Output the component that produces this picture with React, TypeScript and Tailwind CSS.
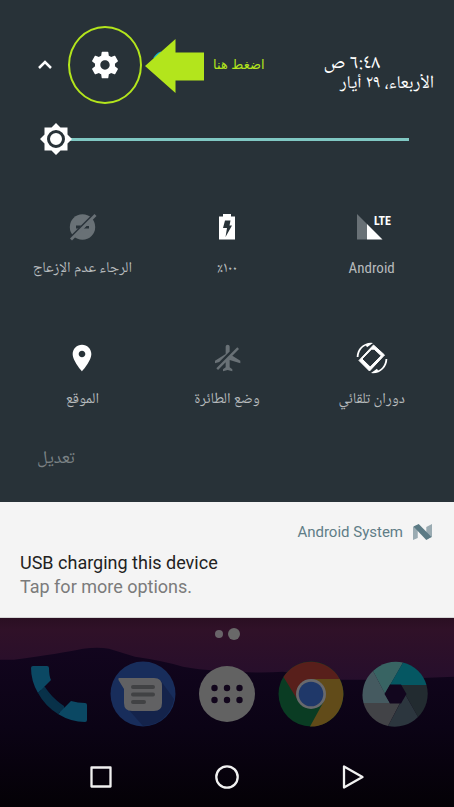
import type { ReactNode } from 'react';

function Gear() {
  return (
    <svg viewBox="0 0 24 24" className="size-8" fill="#fff" aria-hidden="true">
      <path d="M19.43 12.98c.04-.32.07-.64.07-.98s-.03-.66-.07-.98l2.11-1.65c.19-.15.24-.42.12-.64l-2-3.46c-.12-.22-.39-.3-.61-.22l-2.49 1c-.52-.4-1.08-.73-1.69-.98l-.38-2.65C14.46 2.18 14.25 2 14 2h-4c-.25 0-.46.18-.49.42l-.38 2.65c-.61.25-1.17.59-1.69.98l-2.49-1c-.23-.09-.49 0-.61.22l-2 3.46c-.13.22-.07.49.12.64l2.11 1.65c-.04.32-.07.65-.07.98s.03.66.07.98l-2.11 1.65c-.19.15-.24.42-.12.64l2 3.46c.12.22.39.3.61.22l2.49-1c.52.4 1.08.73 1.69.98l.38 2.65c.03.24.24.42.49.42h4c.25 0 .46-.18.49-.42l.38-2.65c.61-.25 1.17-.59 1.69-.98l2.49 1c.23.09.49 0 .61-.22l2-3.46c.12-.22.07-.49-.12-.64l-2.11-1.65zM12 15.500c-1.930 0-3.500-1.570-3.500-3.500s1.570-3.500 3.500-3.500 3.500 1.570 3.500 3.500-1.570 3.500-3.500 3.500z" />
    </svg>
  );
}

function BrightnessSlider() {
  return (
    <div className="relative mx-10 h-8">
      <div className="flex h-8 items-center pl-4 pr-[5px]">
        <div className="h-[3px] w-full bg-[#80c8c3]" />
      </div>
      <svg viewBox="0 0 32 32" className="pointer-events-none absolute left-0 top-0 size-8" aria-hidden="true">
        <path d="M16 0l4.500 4.500H27.500V11.500L32 16l-4.500 4.500V27.500H20.500L16 32l-4.500-4.500H4.500V20.500L0 16l4.500-4.500V4.500H11.500z" fill="#fff" />
        <circle cx="16" cy="16" r="7.500" fill="#fff" stroke="#283238" strokeWidth="3" />
      </svg>
      <input type="range" min="0" max="100" defaultValue="0" aria-label="السطوع" className="absolute inset-0 h-8 w-full cursor-pointer opacity-0" />
    </div>
  );
}

const tiles: { label: string; latin?: boolean; icon: ReactNode }[] = [
  {
    label: 'Android',
    latin: true,
    icon: (
      <svg viewBox="0 0 40 32" className="h-8 w-10" aria-hidden="true">
        <path d="M5 3v25.500h10V13z" fill="#697176" />
        <path d="M15 13v15.500h15.500z" fill="#fff" />
        <text x="22" y="14" direction="ltr" fill="#fff" fontSize="12" fontWeight="700" fontFamily="Roboto Condensed">LTE</text>
      </svg>
    ),
  },
  {
    label: '١٠٠٪',
    icon: (
      <svg viewBox="0 0 32 32" className="size-8" aria-hidden="true">
        <path d="M8 5.500h4V3h8v2.500h4v23H8z" fill="#fff" />
        <path d="M14 9.500h5.500l-1 5h2.500l-6.500 11.500 1.500-9h-4z" fill="#283238" />
      </svg>
    ),
  },
  {
    label: 'الرجاء عدم الإزعاج',
    icon: (
      <svg viewBox="0 0 32 32" className="size-8" aria-hidden="true">
        <circle cx="16.500" cy="16" r="12.700" fill="#697176" />
        <path d="M10 14.500h5l-2 3h-3zM20 15h3v2.500h-5.500z" fill="#283238" />
        <path d="M3.500 26L26 3.500l2 1.500L5.500 28z" fill="#283238" />
        <path d="M4 27.500L28.500 3l2 2L6 29.500z" fill="#697176" />
      </svg>
    ),
  },
  {
    label: 'دوران تلقائي',
    icon: (
      <svg viewBox="0 0 32 32" className="size-8" fill="#fff" aria-hidden="true">
        <path fillRule="evenodd" strokeLinejoin="round" stroke="#fff" strokeWidth="1" d="M17.500 3L28.500 13L13.500 29L3 18.500zM15.500 7.200L6 17L14.200 25L25.200 13.700L18.200 7.200z" />
        <path d="M.7 15C.8 7 7 .8 15 .7l2 .3-6 4.200-1-1.700C5.500 5.500 2.800 9.500 2.500 15zM31.300 17c-.1 8-6.300 14.200-14.300 14.300l-2-.3 6-4.200 1 1.700c4.500-2 7.200-6 7.500-11.500z" />
      </svg>
    ),
  },
  {
    label: 'وضع الطائرة',
    icon: (
      <svg viewBox="0 0 24 24" className="size-8" fill="#697176" aria-hidden="true">
        <path d="M13 9V3.500c0-.83-.67-1.500-1.500-1.500S10 2.670 10 3.500v3.680l7.830 7.830L21 16v-2l-8-5zM3 5.270l4.990 4.990L2 14v2l8-2.500V19l-2 1.500V22l3.500-1 3.500 1v-1.500L13 19v-3.730L18.730 21 20 19.730 4.270 4 3 5.270z" transform="matrix(-1 0 0 1 24 0)" />
      </svg>
    ),
  },
  {
    label: 'الموقع',
    icon: (
      <svg viewBox="0 0 24 24" className="size-8" fill="#fff" aria-hidden="true">
        <path d="M12 2C8.130 2 5 5.130 5 9c0 5.250 7 13 7 13s7-7.750 7-13c0-3.870-3.130-7-7-7zm0 9.500c-1.380 0-2.500-1.120-2.500-2.500s1.120-2.500 2.500-2.500 2.500 1.120 2.500 2.500-1.120 2.500-2.500 2.500z" />
      </svg>
    ),
  },
];

function QuickSettings() {
  return (
    <section className="bg-[#283238] pt-[26px] pb-8">
      <header dir="ltr" className="flex h-[78px] items-center">
        <button aria-label="طي" className="ml-[37px] mr-[15px]">
          <svg viewBox="0 0 16 16" className="size-4" fill="none" stroke="#fff" strokeWidth="2.500" aria-hidden="true">
            <path d="M2 11l6-6 6 6" />
          </svg>
        </button>
        <button aria-label="الإعدادات" className="flex h-[78px] w-[74px] items-center justify-center rounded-[50%] border-2 border-[#b3e51c]">
          <Gear />
        </button>
        <svg viewBox="0 0 60 56" className="ml-[3px] mt-[2px] h-14 w-[60px]" aria-hidden="true">
          <path d="M8 20.500Q11 15 16 13.500v4z" fill="#14b5d0" />
          <path d="M0 28L30.500 1v13.500H59v28H30.500V55z" fill="#b3e51c" />
        </svg>
        <p dir="rtl" className="ml-2 whitespace-nowrap font-['Liberation_Sans','DejaVu_Sans',sans-serif] text-[13px] text-[#b3e51c]">اضغط هنا</p>
        <div dir="rtl" className="ml-auto mr-5 mt-4 whitespace-nowrap text-right text-white">
          <p className="mr-[54px] text-xl leading-5">٦:٤٨ ص</p>
          <p className="text-lg leading-[18px]">الأربعاء، ٢٩ أيار</p>
        </div>
      </header>
      <div dir="ltr" className="mt-[19px]">
        <BrightnessSlider />
      </div>
      <div className="mt-14 grid grid-cols-3 gap-y-16 px-[10px]">
        {tiles.map((t) => (
          <button key={t.label} className="flex flex-col items-center gap-[15px]">
            {t.icon}
            <span className={t.latin ? "font-['Roboto_Condensed',sans-serif] text-[15px] leading-5 text-[#b7bbbd]" : 'whitespace-nowrap text-[15px] leading-5 text-[#b7bbbd]'}>{t.label}</span>
          </button>
        ))}
      </div>
      <div className="mt-[37px] flex justify-end pl-[37px]">
        <button className="text-lg leading-6 text-[#7b8285]">تعديل</button>
      </div>
    </section>
  );
}

function Notification() {
  return (
    <section dir="ltr" className="border-b border-[#d5d5d5] bg-[#f4f4f4] px-5 pt-5 pb-[18px] font-['Roboto',sans-serif]">
      <div className="flex items-center justify-end gap-[10px] pr-[2px]">
        <p className="text-[15px] leading-5 text-[#607d87]">Android System</p>
        <svg viewBox="0 0 20 16" preserveAspectRatio="none" className="h-4 w-[19px]" aria-hidden="true">
          <path d="M0 3l5-2v13l-5 2zM14 3l6-3v13l-6 2z" fill="#9aabb2" />
          <path d="M0.500 2.500L6 0l13.500 13L14 16z" fill="#5b7a84" />
        </svg>
      </div>
      <h2 className="mt-[9px] text-lg leading-6 text-[#222]">USB charging this device</h2>
      <p className="text-lg leading-6 text-[#7b7b7b]">Tap for more options.</p>
    </section>
  );
}

function Home() {
  return (
    <section dir="ltr" className="relative isolate flex-1 overflow-hidden">
      <svg viewBox="0 0 454 190" preserveAspectRatio="none" className="absolute inset-0 -z-10 size-full" aria-hidden="true">
        <defs>
          <linearGradient id="sky" x1="0" y1="0" x2="0" y2="1">
            <stop offset="0" stopColor="#2a0f22" />
            <stop offset="0.060" stopColor="#301128" />
            <stop offset="0.350" stopColor="#250e2c" />
          </linearGradient>
          <linearGradient id="hill" x1="0" y1="0" x2="0" y2="1">
            <stop offset="0" stopColor="#12051e" />
            <stop offset="0.500" stopColor="#0b0315" />
            <stop offset="1" stopColor="#040106" />
          </linearGradient>
        </defs>
        <path d="M0 0h454v190H0z" fill="url(#sky)" />
        <path d="M0 42h14Q60 36 83 31q15-2 26 0l26 8q28 4 48 10 15 3 35 4 40 3 65 1l55 8h38l78-3v131H0z" fill="url(#hill)" />
      </svg>
      <div className="flex items-center justify-center gap-[5px] pt-[10px]">
        <span className="size-2 rounded-full bg-[#696469]" />
        <span className="size-3 rounded-full bg-[#696969]" />
      </div>
      <nav className="mt-[21px] grid grid-cols-5 justify-items-center px-[17px]">
        <button aria-label="Phone">
          <svg viewBox="0 0 66 66" className="size-[66px]" aria-hidden="true">
            <path d="M12 24c8 17 14 23 28 30l-2-9C28 38 23 32 19 26z" fill="#08304a" />
            <path d="M5 7q0-2 2-2h14q2 0 2 2 0 8 2 12L12 32Q5 20 5 7z" fill="#0b4863" />
            <path d="M12 32l6-5q7 12 19 20l-5 6Q19 45 12 32z" fill="#083149" />
            <path d="M32 53l13-13q7 2 14 2 2 0 2 2v15q0 2-2 2-14 0-27-8z" fill="#0b4863" />
          </svg>
        </button>
        <button aria-label="Messages">
          <svg viewBox="0 0 66 66" className="size-[66px]" aria-hidden="true">
            <circle cx="33" cy="33" r="32.500" fill="#182d5b" />
            <path d="M51 20L64 38A32 32 0 0 1 33 65L18 48z" fill="#14234b" />
            <path d="M9 17h35q8 0 8 8v17q0 8-8 8H22q-8 0-8-8V28L8.500 19Q8 17 9 17z" fill="#616163" />
            <path d="M23 26h20M23 33.500h20M23 41h11" stroke="#414244" strokeWidth="4" strokeLinecap="round" />
          </svg>
        </button>
        <button aria-label="All apps">
          <svg viewBox="0 0 66 66" className="size-[66px]" aria-hidden="true">
            <circle cx="33" cy="33" r="28" fill="#626262" />
            <g fill="#12061c">
              <circle cx="20.500" cy="27" r="3.200" /><circle cx="33" cy="27" r="3.200" /><circle cx="45.500" cy="27" r="3.200" />
              <circle cx="20.500" cy="39" r="3.200" /><circle cx="33" cy="39" r="3.200" /><circle cx="45.500" cy="39" r="3.200" />
            </g>
          </svg>
        </button>
        <button aria-label="Chrome">
          <svg viewBox="0 0 66 66" className="size-[66px]" aria-hidden="true">
            <circle cx="33" cy="33" r="32.500" fill="#0a3c23" />
            <path d="M33 18h28.700A32.500 32.500 0 0 1 32 65.500L46 40z" fill="#614b19" />
            <path d="M5.500 16A32.500 32.500 0 0 1 61.700 18H33L19 38z" fill="#581f1b" />
            <circle cx="33" cy="33" r="15" fill="#68696d" />
            <circle cx="33" cy="33" r="12.300" fill="#1f3869" />
          </svg>
        </button>
        <button aria-label="Camera">
          <svg viewBox="0 0 66 66" className="size-[66px]" aria-hidden="true">
            <path d="M11 10A32.500 32.500 0 0 1 41 1.500L23 33z" fill="#386463" />
            <path d="M41 1.500A32.500 32.500 0 0 1 64.500 24H28z" fill="#055762" />
            <path d="M64.500 24A32.500 32.500 0 0 1 56 56L38 24z" fill="#222b30" />
            <path d="M56 56A32.500 32.500 0 0 1 26 65L43 33z" fill="#2c363e" />
            <path d="M26 65A32.500 32.500 0 0 1 1.500 42H38z" fill="#424347" />
            <path d="M1.500 42A32.500 32.500 0 0 1 11 10L28 42z" fill="#455a60" />
            <path d="M28 23.500h11L44.500 33 39 42.500H28L22.500 33z" fill="#12061e" />
          </svg>
        </button>
      </nav>
      <nav className="mt-[37px] grid grid-cols-3 justify-items-center px-[38px] pb-[17px]">
        <button aria-label="Recent apps">
          <svg viewBox="0 0 26 26" className="size-[26px]" fill="none" stroke="#f1f1f1" strokeWidth="2.300" strokeLinejoin="round" aria-hidden="true"><path d="M3.500 3.500h19v19h-19z" /></svg>
        </button>
        <button aria-label="Home">
          <svg viewBox="0 0 26 26" className="size-[26px]" fill="none" stroke="#f1f1f1" strokeWidth="2.300" aria-hidden="true"><circle cx="13" cy="13" r="10.700" /></svg>
        </button>
        <button aria-label="Back">
          <svg viewBox="0 0 26 26" className="size-[26px]" fill="none" stroke="#f1f1f1" strokeWidth="2.300" strokeLinejoin="round" aria-hidden="true"><path d="M4 2.500v21L22.500 13z" /></svg>
        </button>
      </nav>
    </section>
  );
}

export default function App() {
  return (
    <main dir="rtl" className="flex min-h-screen flex-col bg-[#0b0315] font-['Noto_Naskh_Arabic_UI','Noto_Naskh_Arabic','Noto_Sans',sans-serif]">
      <QuickSettings />
      <Notification />
      <Home />
    </main>
  );
}
